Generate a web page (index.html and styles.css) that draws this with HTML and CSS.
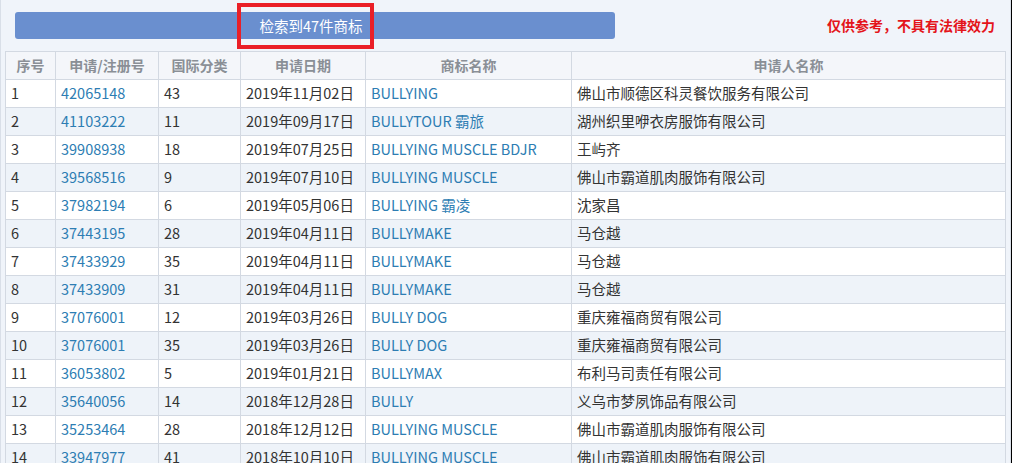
FILE: index.html
```html
<!DOCTYPE html>
<html lang="zh-CN">
<head>
<meta charset="utf-8">
<title>检索结果</title>
<link rel="stylesheet" href="styles.css">
</head>
<body>
<div class="page">
  <div class="top">
    <div class="bar">
      <span class="bar-text">检索到47件商标</span>
      <span class="mark"></span>
    </div>
    <div class="note">仅供参考，不具有法律效力</div>
  </div>
  <table class="grid">
    <colgroup>
      <col class="c1"><col class="c2"><col class="c3"><col class="c4"><col class="c5"><col class="c6">
    </colgroup>
    <thead>
      <tr><th>序号</th><th>申请/注册号</th><th>国际分类</th><th>申请日期</th><th>商标名称</th><th>申请人名称</th></tr>
    </thead>
    <tbody>
      <tr><td>1</td><td class="lk">42065148</td><td>43</td><td>2019年11月02日</td><td class="lk">BULLYING</td><td>佛山市顺德区科灵餐饮服务有限公司</td></tr>
      <tr><td>2</td><td class="lk">41103222</td><td>11</td><td>2019年09月17日</td><td class="lk">BULLYTOUR 霸旅</td><td>湖州织里咿衣房服饰有限公司</td></tr>
      <tr><td>3</td><td class="lk">39908938</td><td>18</td><td>2019年07月25日</td><td class="lk">BULLYING MUSCLE BDJR</td><td>王屿齐</td></tr>
      <tr><td>4</td><td class="lk">39568516</td><td>9</td><td>2019年07月10日</td><td class="lk">BULLYING MUSCLE</td><td>佛山市霸道肌肉服饰有限公司</td></tr>
      <tr><td>5</td><td class="lk">37982194</td><td>6</td><td>2019年05月06日</td><td class="lk">BULLYING 霸凌</td><td>沈家昌</td></tr>
      <tr><td>6</td><td class="lk">37443195</td><td>28</td><td>2019年04月11日</td><td class="lk">BULLYMAKE</td><td>马仓越</td></tr>
      <tr><td>7</td><td class="lk">37433929</td><td>35</td><td>2019年04月11日</td><td class="lk">BULLYMAKE</td><td>马仓越</td></tr>
      <tr><td>8</td><td class="lk">37433909</td><td>31</td><td>2019年04月11日</td><td class="lk">BULLYMAKE</td><td>马仓越</td></tr>
      <tr><td>9</td><td class="lk">37076001</td><td>12</td><td>2019年03月26日</td><td class="lk">BULLY DOG</td><td>重庆雍福商贸有限公司</td></tr>
      <tr><td>10</td><td class="lk">37076001</td><td>35</td><td>2019年03月26日</td><td class="lk">BULLY DOG</td><td>重庆雍福商贸有限公司</td></tr>
      <tr><td>11</td><td class="lk">36053802</td><td>5</td><td>2019年01月21日</td><td class="lk">BULLYMAX</td><td>布利马司责任有限公司</td></tr>
      <tr><td>12</td><td class="lk">35640056</td><td>14</td><td>2018年12月28日</td><td class="lk">BULLY</td><td>义乌市梦夙饰品有限公司</td></tr>
      <tr><td>13</td><td class="lk">35253464</td><td>28</td><td>2018年12月12日</td><td class="lk">BULLYING MUSCLE</td><td>佛山市霸道肌肉服饰有限公司</td></tr>
      <tr><td>14</td><td class="lk">33947977</td><td>41</td><td>2018年10月10日</td><td class="lk">BULLYING MUSCLE</td><td>佛山市霸道肌肉服饰有限公司</td></tr>
    </tbody>
  </table>
</div>
</body>
</html>
```

FILE: styles.css
```css
html, body {
  margin: 0;
  padding: 0;
  background: #000;
}
body {
  font-family: "Noto Sans CJK SC", "Noto Sans", sans-serif;
  font-size: 14.5px;
  color: #333;
}
.page {
  width: 1005px;
  min-height: 463px;
  background: #f0f4fa;
  border-left: 1px solid #d9dfe8;
  border-right: 1px solid #d9dfe8;
  padding: 0 0 0 4px;
  box-sizing: content-box;
  overflow: hidden;
}
.top {
  height: 51px;
  display: flex;
  align-items: center;
  justify-content: space-between;
  padding: 0 10px 0 10px;
  box-sizing: border-box;
  width: 1000px;
}
.bar {
  position: relative;
  width: 600px;
  height: 27px;
  margin-top: -1px;
  background: #6a8fcf;
  border-radius: 3px;
  display: flex;
  align-items: center;
  justify-content: center;
}
.bar-text {
  color: #fff;
  font-size: 14.5px;
  position: relative;
  left: -4px;
}
.mark {
  position: absolute;
  left: 222px;
  top: -9px;
  width: 137px;
  height: 46px;
  border: 4px solid #ea1f27;
  box-sizing: border-box;
}
.note {
  color: #e4141b;
  font-weight: bold;
  font-size: 14px;
  margin-top: -2px;
}
.grid {
  width: 1001px;
  border-collapse: collapse;
  table-layout: fixed;
  background: #fff;
}
.c1 { width: 50px; }
.c2 { width: 103px; }
.c3 { width: 82px; }
.c4 { width: 125px; }
.c5 { width: 206px; }
.c6 { width: auto; }
.grid th, .grid td {
  border: 1px solid #d3d9e2;
  height: 28px;
  padding: 0 0 1px 5px;
  box-sizing: border-box;
  white-space: nowrap;
  overflow: hidden;
  text-align: left;
  font-weight: normal;
  line-height: 26px;
}
.grid th {
  text-align: center;
  color: #8a8f96;
  font-weight: bold;
  font-size: 14px;
  background: #f4f6fa;
  padding: 0 0 1px 0;
}
.grid tbody tr:nth-child(even) td {
  background: #eef3f9;
}
.grid td.lk {
  color: #2d7db3;
}
```
